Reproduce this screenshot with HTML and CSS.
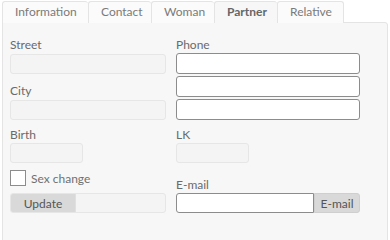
FILE: index.html
```html
<!DOCTYPE html>
<html lang="en">
<head>
    <meta charset="UTF-8">
    <title>Partner</title>
    <link rel="stylesheet" href="styles.css">
</head>
<body>
    <div class="tabs">
        <div class="tab">Information</div>
        <div class="tab">Contact</div>
        <div class="tab">Woman</div>
        <div class="tab active">Partner</div>
        <div class="tab">Relative</div>
    </div>
    <div class="panel">
        <div class="col left">
            <label class="lbl">Street</label>
            <input class="field off" disabled>
            <label class="lbl gap10">City</label>
            <input class="field off" disabled>
            <label class="lbl gap8">Birth</label>
            <input class="field off short" disabled>
            <div class="check">
                <span class="box"></span>
                <span>Sex change</span>
            </div>
            <div class="group off">
                <button class="btn">Update</button>
            </div>
        </div>
        <div class="col right">
            <label class="lbl">Phone</label>
            <input class="field on tall">
            <input class="field on tall">
            <input class="field on tall">
            <label class="lbl gap6">LK</label>
            <input class="field off short" disabled>
            <label class="lbl gap15">E-mail</label>
            <div class="group">
                <input class="field on grow">
                <button class="btn">E-mail</button>
            </div>
        </div>
    </div>
</body>
</html>
```

FILE: styles.css
```css
html, body {
    margin: 0;
    padding: 0;
    background: #fff;
    font-family: Lato, "Open Sans", sans-serif;
    font-size: 12px;
    color: #6a6a6a;
    overflow: hidden;
}

body {
    padding: 1px 2px 0 2px;
}

.tabs {
    display: flex;
    height: 21px;
}

.tab {
    box-sizing: border-box;
    height: 22px;
    padding: 0 12px;
    line-height: 20px;
    border: 1px solid #e4e4e4;
    border-right: none;
    border-bottom: none;
    border-radius: 3px 3px 0 0;
    background: #fbfbfb;
    color: #7a7a7a;
    text-align: center;
}

.tab:nth-child(1) { width: 86px; }
.tab:nth-child(2) { width: 63px; }
.tab:nth-child(3) { width: 63px; }
.tab:nth-child(4) { width: 63px; }
.tab:nth-child(5) { width: 67px; border-right: 1px solid #e4e4e4; }

.tab.active {
    background: #f7f7f7;
    font-weight: bold;
    color: #666;
    position: relative;
    z-index: 1;
}

.panel {
    display: flex;
    gap: 10px;
    height: 230px;
    box-sizing: border-box;
    padding: 15px 7px 0 7px;
    background: #f7f7f7;
    border: 1px solid #e4e4e4;
    border-radius: 0 3px 0 0;
}

.col {
    display: flex;
    flex-direction: column;
}

.left { width: 156px; }
.right { width: 184px; }

.lbl {
    display: block;
    height: 14px;
    line-height: 14px;
    margin-bottom: 2px;
}

.right .lbl { margin-bottom: 1px; }

.gap10 { margin-top: 10px; }
.gap8 { margin-top: 8px; }
.gap6 { margin-top: 6px; }
.gap15 { margin-top: 15px; }

.field {
    box-sizing: border-box;
    height: 20px;
    margin: 0;
    padding: 0 4px;
    border-radius: 3px;
    font: inherit;
    outline: none;
    flex: none;
}

.field.off {
    border: 1px solid #e6e6e6;
    background: #f4f4f4;
    width: 156px;
}

.field.short { width: 73px; }
.left .field.short { margin-top: -1px; }

.field.on {
    border: 1px solid #8c8c8c;
    background: #fff;
    width: 184px;
}

.field.tall {
    height: 21px;
    margin-bottom: 2px;
}

.check {
    display: flex;
    align-items: center;
    gap: 5px;
    height: 16px;
    margin-top: 7px;
    color: #707070;
}

.box {
    box-sizing: border-box;
    width: 16px;
    height: 16px;
    border: 1px solid #8c8c8c;
    background: #fff;
}

.group {
    display: flex;
    height: 20px;
    border-radius: 3px;
    flex: none;
}

.group.off {
    box-sizing: border-box;
    width: 156px;
    margin-top: 7px;
    border: 1px solid #e6e6e6;
    background: #f4f4f4;
}

.btn {
    box-sizing: border-box;
    height: 20px;
    margin: 0;
    padding: 0;
    font: inherit;
    color: #555;
    background: #d9d9d9;
    border: 1px solid #cfcfcf;
    border-radius: 0 3px 3px 0;
}

.group.off .btn {
    width: 65px;
    height: 18px;
    border: none;
    border-right: 1px solid #e0e0e0;
    border-radius: 2px 0 0 2px;
}

.field.grow {
    width: 138px;
    border-radius: 3px 0 0 3px;
}

.right .btn { width: 46px; }
```
